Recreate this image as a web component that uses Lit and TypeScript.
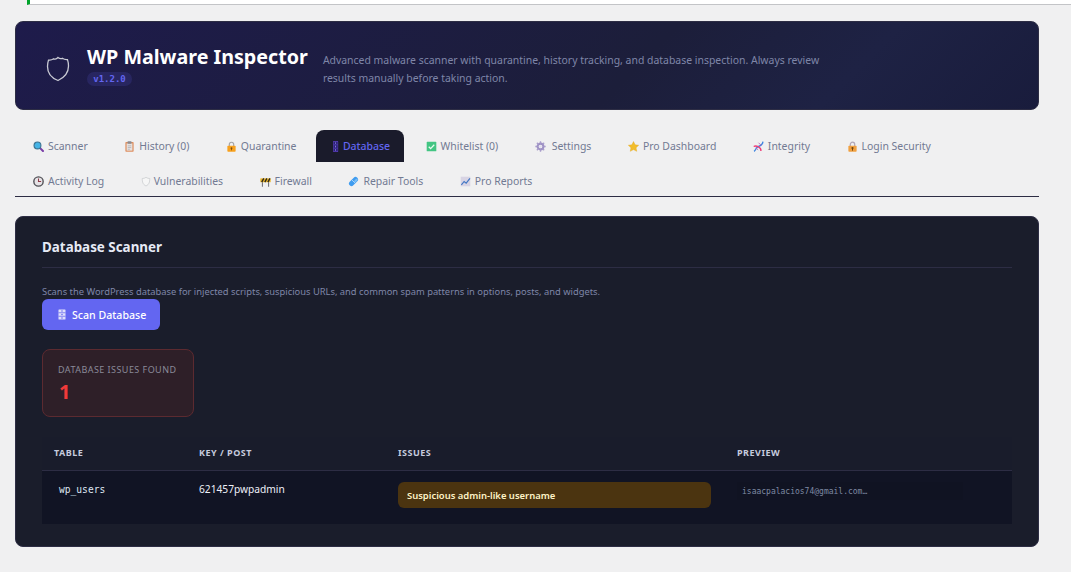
import { LitElement, html, css, svg } from "lit";
import { customElement } from "lit/decorators.js";

const icons: Record<string, unknown> = {
  search: svg`<path d="M10 10l4.500 4.500" stroke="#7b3fa8" stroke-width="3" stroke-linecap="round"/><circle cx="6.500" cy="6.500" r="5" fill="#45b4e6" stroke="#3d7391" stroke-width="1.600"/>`,
  clip: svg`<rect x="2" y="1.500" width="12" height="14" rx="1" fill="#de8f60"/><rect x="3.800" y="3.500" width="8.400" height="10.500" fill="#e6e2e0"/><rect x="5" y=".5" width="6" height="3.500" rx="1" fill="#8b8a90"/><path d="M5.500 7h5M5.500 9.500h5M5.500 12h3" stroke="#a9a9b2"/>`,
  lock: svg`<path d="M4.800 8V5a3.200 3.200 0 016.400 0v3" fill="none" stroke="#a5a5a8" stroke-width="1.700"/><rect x="2" y="7" width="12" height="8.500" rx="1" fill="#f7a11e"/><circle cx="8" cy="10.500" r="1.300" fill="#7c4c0e"/><rect x="7.400" y="10.500" width="1.200" height="3" fill="#7c4c0e"/>`,
  db: svg`<rect x="1" y=".5" width="12" height="15" rx="1" fill="#2a2170" stroke="#5b3fc0" stroke-width="1.500"/><path d="M1 5.500h12M1 10.500h12" stroke="#5b3fc0" stroke-width="1.200"/><circle cx="7" cy="3" r="1.300" fill="#8b85f0"/><circle cx="7" cy="8" r="1.300" fill="#8b85f0"/><circle cx="7" cy="13" r="1.300" fill="#8b85f0"/>`,
  check: svg`<rect x="1" y="1" width="14" height="14" rx="1" fill="#43c583"/><path d="M4 8.300l2.700 2.700 5.300-5.500" fill="none" stroke="#e8fbf0" stroke-width="1.800"/>`,
  gear: svg`<circle cx="8" cy="8" r="4.200" fill="none" stroke="#9d90c4" stroke-width="3"/><path d="M8 .5v3M8 12.500v3M.5 8h3M12.500 8h3M2.700 2.700l2.200 2.200M11.100 11.100l2.200 2.200M2.700 13.300l2.200-2.200M11.100 4.900l2.200-2.200" stroke="#a99dcb" stroke-width="2"/><circle cx="8" cy="8" r="1.800" fill="#e2deee"/>`,
  star: svg`<path d="M8 .8l2.300 4.700 5.200.7-3.800 3.600 1 5.200L8 12.500 3.300 15l1-5.200L.5 6.200l5.200-.7z" fill="#f2bd2c" stroke="#e3a91f" stroke-width=".6" stroke-linejoin="round"/>`,
  dna: svg`<path d="M1.500 15C5 13 3.500 9.500 8 8s6-3 6.500-7" fill="none" stroke="#3f86e0" stroke-width="2"/><path d="M1 8c2.500-1.500 5-.5 7 .5s4 2 3.500 6" fill="none" stroke="#ef3f78" stroke-width="2"/><path d="M8 2.500l4 4M4 10l3.500 3" stroke="#c25ab0" stroke-width="1.200"/>`,
  keylock: svg`<path d="M4.800 8V5a3.200 3.200 0 016.400 0v3" fill="none" stroke="#b2a8b8" stroke-width="1.800"/><rect x="2" y="7" width="12" height="8.500" rx="1" fill="#f0a040"/><circle cx="8" cy="10.300" r="1.600" fill="#6e430d"/><path d="M8 10.500v3.500" stroke="#6e430d" stroke-width="1.400"/>`,
  clock: svg`<circle cx="8" cy="8" r="6.800" fill="#e6e3e6" stroke="#4f4f55" stroke-width="2"/><path d="M8 3.800V8h3.800" fill="none" stroke="#8e3a48" stroke-width="1.500"/>`,
  shield: svg`<path d="M8 2c1.800 1.200 3.800 1.600 6 1.600 0 5-.8 8.700-6 10.900-5.200-2.200-6-5.900-6-10.900C4.200 3.600 6.200 3.200 8 2z" fill="#f6f6f6" stroke="#c6c8cc" stroke-width="1.100"/>`,
  barrier: svg`<path d="M3.500 9v6.500M12.500 9v6.500" stroke="#6d6d72" stroke-width="1.500"/><rect x=".5" y="3.500" width="15" height="5.500" fill="#e9b324"/><path d="M2.500 9l3-5.500M7 9l3-5.500M11.500 9l3-5.500" stroke="#2e2a22" stroke-width="2"/>`,
  pill: svg`<rect x=".2" y="4.300" width="15.600" height="7.400" rx="3.700" transform="rotate(-45 8 8)" fill="#3f9cf0"/><path d="M5.400 5.400l5.200 5.200" stroke="#bfe0fa" stroke-width="1.200"/><rect x="8.500" y="5" width="6" height="3" rx="1.500" transform="rotate(-45 11.500 6.500)" fill="#79bdf5"/>`,
  chart: svg`<rect x="1" y="1" width="14" height="14" fill="#d8d4e4"/><path d="M2 13l4-5 3 2.500L14.500 3.500" fill="none" stroke="#4277c4" stroke-width="1.700"/>`,
};

const tabs = [
  ["search", "Scanner"], ["clip", "History (0)"], ["lock", "Quarantine"], ["db", "Database"],
  ["check", "Whitelist (0)"], ["gear", "Settings"], ["star", "Pro Dashboard"], ["dna", "Integrity"], ["keylock", "Login Security"],
  ["clock", "Activity Log"], ["shield", "Vulnerabilities"], ["barrier", "Firewall"], ["pill", "Repair Tools"], ["chart", "Pro Reports"],
];

@customElement("app-root")
export class AppRoot extends LitElement {
  static styles = css`
    :host { display: block; height: 572px; overflow: hidden; background: #f0f0f1; font-family: "Noto Sans", "Open Sans", sans-serif; }
    .topbar { margin-left: 27px; height: 5px; background: #fff; border-left: 3px solid #00a32a; border-bottom: 1px solid #c3c4c7; box-sizing: border-box; }
    .wrap { width: 1024px; margin: 16px 0 0 15px; }
    .header { box-sizing: border-box; height: 89px; border-radius: 8px; border: 1px solid #2d2d44; background: linear-gradient(135deg, #1e1b4b 0%, #1c1e3a 60%, #1e2244 80%, #191c3c 100%); display: flex; align-items: center; padding: 7px 30px 0; }
    .logo { width: 24px; height: 26px; margin-right: 17px; flex: none; }
    .brand { margin: 0 15px 8px 0; flex: none; }
    h1 { margin: 0; font-size: 19.7px; line-height: 24px; font-weight: 700; color: #fff; white-space: nowrap; }
    .ver { display: block; width: 45px; margin-top: 3px; box-sizing: border-box; text-align: center; font: 700 9px/14px "DejaVu Sans Mono", monospace; color: #6366f1; background: rgba(99,102,241,.15); border-radius: 8px; }
    .desc { margin: 0; width: 510px; font-size: 10.45px; line-height: 18px; color: #7f86a8; }
    .tabs { display: flex; flex-wrap: wrap; column-gap: 4.5px; row-gap: 3px; box-sizing: border-box; margin-top: 20px; padding-left: 1px; border-bottom: 1px solid #2d2d44; height: 67px; align-content: flex-start; }
    .tab { display: flex; align-items: center; height: 32px; padding: 0 15px 0 17px; gap: 4px; font-size: 10.45px; color: #727a93; white-space: nowrap; border-radius: 8px 8px 0 0; }
    .tab svg { width: 11px; height: 11px; flex: none; }
    .tab.db svg { width: 6px; }
    .tab.gear { gap: 6px; }
    .tab.shield { gap: 3px; }
    .tab.shield svg { width: 10px; }
    .tab.on { background: #1a1b2b; color: #6366f1; font-weight: 500; padding-right: 14px; }
    .panel { box-sizing: border-box; height: 331px; margin-top: 19px; background: #1a1d2b; border: 1px solid #2d2d44; border-radius: 8px; padding: 21px 26px; }
    h2 { margin: 0; font-size: 13.4px; line-height: 18px; font-weight: 700; color: #e6eaf5; padding-bottom: 11px; border-bottom: 1px solid #2d2d44; }
    .hint { margin: 17px 0 0; font-size: 9.35px; line-height: 14px; color: #7f86a8; }
    .btn { display: flex; width: 118px; align-items: center; gap: 6px; height: 31px; box-sizing: border-box; padding: 0 14px 0 16px; background: #6366f1; color: #fff; font-size: 10.6px; font-weight: 500; border-radius: 6px; white-space: nowrap; }
    .btn svg { width: 8px; height: 11px; flex: none; }
    .stat { box-sizing: border-box; width: 152px; height: 68px; margin-top: 19px; padding: 13px 15px 0; border: 1px solid #5c2a30; border-radius: 8px; background: #2e1f28; }
    .stat .l { font-size: 9px; line-height: 14px; letter-spacing: .45px; color: #8a8a99; white-space: nowrap; }
    .stat .n { font-size: 20px; line-height: 24px; font-weight: 700; color: #f03a3a; margin: 3px 0 0 1px; }
    table { width: 970px; margin-top: 20px; border-collapse: collapse; table-layout: fixed; }
    th { text-align: left; height: 33px; padding: 0 0 2px 12px; box-sizing: border-box; font-size: 9px; font-weight: 700; letter-spacing: .5px; color: #c6cbde; background: #191c2b; border-bottom: 1px solid #2d2d44; }
    td { box-sizing: border-box; vertical-align: top; background: #111424; height: 54px; padding: 0 0 0 12px; color: #eef0f8; }
    .tbl { font: 9.6px/14px "DejaVu Sans Mono", monospace; padding: 12px 0 0 17px; color: #dfe6f2; }
    .key { font-size: 10.2px; line-height: 14px; padding-top: 11px; }
    .issue { box-sizing: border-box; height: 26px; width: 313px; margin-top: 11px; background: #4b3410; border-radius: 6px; display: flex; align-items: center; padding: 1px 9px 0; font-size: 9.45px; font-weight: 600; color: #fef3c7; }
    .prev { display: block; width: 226px; box-sizing: border-box; margin-top: 11px; padding: 3px 0 1px 5px; font: 8px/14px "DejaVu Sans Mono", monospace; color: #7f8aa3; background: #101322; }
  `;

  icon(name: string) {
    return html`<svg viewBox="0 0 16 16" preserveAspectRatio="none">${icons[name]}</svg>`;
  }

  render() {
    return html`
      <div class="topbar"></div>
      <div class="wrap">
        <header class="header">
          <svg class="logo" viewBox="0 0 24 26"><path d="M12 1.500c1.300 1 3 1.300 4.300.8 1.300.9 3.200 1.600 5.200 1.300.7 2.200 1 4 1 6.400 0 6.500-4 11.500-10.500 14.500C5.500 22 1.500 17 1.500 10.500c0-2.400.3-4.200 1-6.400 2 .3 3.900-.4 5.200-1.300 1.300.5 3 .2 4.300-1.300z" fill="none" stroke="#c9cad4" stroke-width="1.300"/></svg>
          <div class="brand"><h1>WP Malware Inspector</h1><span class="ver">v1.2.0</span></div>
          <p class="desc">Advanced malware scanner with quarantine, history tracking, and database inspection. Always review results manually before taking action.</p>
        </header>
        <nav class="tabs">
          ${tabs.map(([i, t]) => html`<div class="tab ${i} ${t === "Database" ? "on" : ""}">${this.icon(i)}${t}</div>`)}
        </nav>
        <section class="panel">
          <h2>Database Scanner</h2>
          <p class="hint">Scans the WordPress database for injected scripts, suspicious URLs, and common spam patterns in options, posts, and widgets.</p>
          <div class="btn"><svg viewBox="0 0 16 22" preserveAspectRatio="none"><rect x="1" y="1" width="14" height="20" rx="1" fill="#dfe0fb"/><path d="M1 7.500h14M1 14.500h14" stroke="#6366f1" stroke-width="1.500"/><circle cx="8" cy="4" r="1.500" fill="#6366f1"/><circle cx="8" cy="11" r="1.500" fill="#6366f1"/><circle cx="8" cy="18" r="1.500" fill="#6366f1"/></svg>Scan Database</div>
          <div class="stat"><div class="l">DATABASE ISSUES FOUND</div><div class="n">1</div></div>
          <table>
            <thead><tr><th style="width:145px">TABLE</th><th style="width:199px">KEY / POST</th><th style="width:339px">ISSUES</th><th>PREVIEW</th></tr></thead>
            <tbody><tr>
              <td class="tbl">wp_users</td>
              <td class="key">621457pwpadmin</td>
              <td><div class="issue">Suspicious admin-like username</div></td>
              <td><code class="prev">isaacpalacios74@gmail.com…</code></td>
            </tr></tbody>
          </table>
        </section>
      </div>
    `;
  }
}
